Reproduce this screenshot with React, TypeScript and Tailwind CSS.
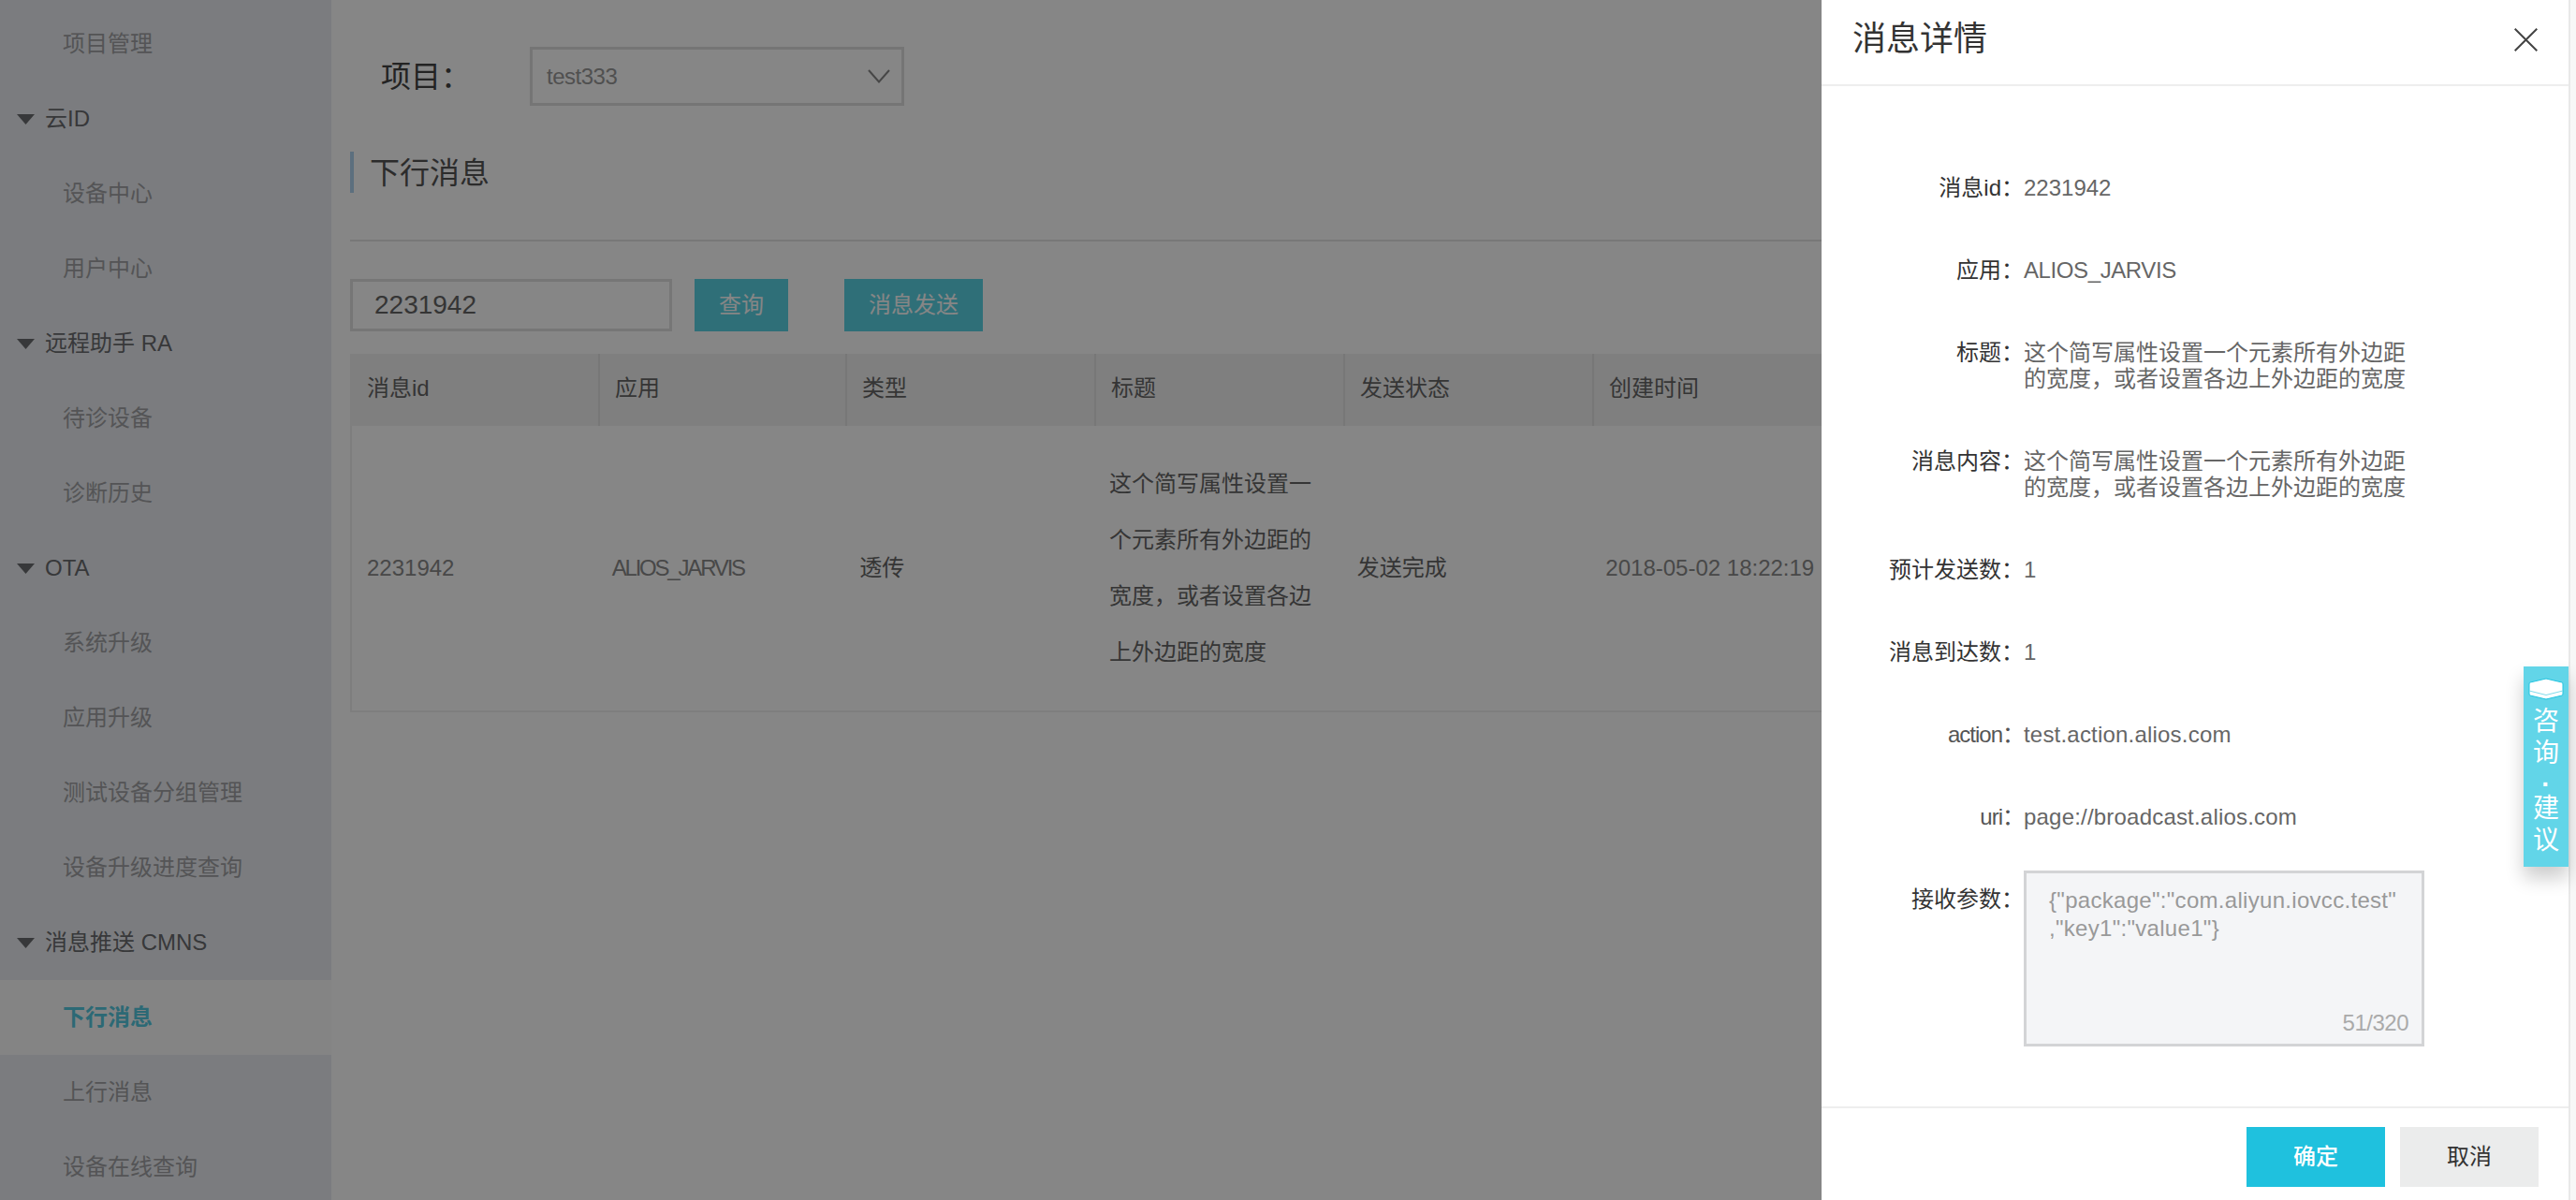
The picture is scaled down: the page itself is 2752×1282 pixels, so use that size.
import React from "react";

const font = '"Liberation Sans","Noto Sans CJK SC",sans-serif';

type SideItem = { text: string; parent?: boolean; active?: boolean };
const sideItems: SideItem[] = [
  { text: "项目管理" },
  { text: "云ID", parent: true },
  { text: "设备中心" },
  { text: "用户中心" },
  { text: "远程助手 RA", parent: true },
  { text: "待诊设备" },
  { text: "诊断历史" },
  { text: "OTA", parent: true },
  { text: "系统升级" },
  { text: "应用升级" },
  { text: "测试设备分组管理" },
  { text: "设备升级进度查询" },
  { text: "消息推送 CMNS", parent: true },
  { text: "下行消息", active: true },
  { text: "上行消息" },
  { text: "设备在线查询" },
];

function Sidebar() {
  return (
    <aside className="w-[354px] shrink-0 h-full bg-[#eaedf1] pt-[7px] overflow-hidden">
      {sideItems.map((it) =>
        it.parent ? (
          <div key={it.text} className="h-[80px] flex items-center pl-[18px] text-[24px] text-[#6a6b6e]">
            <svg width="19" height="11" viewBox="0 0 19 11" className="mr-[11px] shrink-0">
              <path d="M0 0H19L9.5 11Z" fill="#6a6b6e" />
            </svg>
            <span>{it.text}</span>
          </div>
        ) : (
          <div
            key={it.text}
            className={
              it.active
                ? "h-[80px] flex items-center pl-[67px] text-[24px] font-bold text-[#55c8de] bg-[#fcfcfc]"
                : "h-[80px] flex items-center pl-[67px] text-[24px] text-[#a0a1a4]"
            }
          >
            {it.text}
          </div>
        )
      )}
    </aside>
  );
}

const headers = [
  { t: "消息id", c: "w-[265px] flex items-center pl-[18px] pb-[4px]" },
  { t: "应用", c: "w-[264px] flex items-center pl-[16px] pb-[4px] border-l-2 border-[#e2e2e2]" },
  { t: "类型", c: "w-[266px] flex items-center pl-[16px] pb-[4px] border-l-2 border-[#e2e2e2]" },
  { t: "标题", c: "w-[266px] flex items-center pl-[16px] pb-[4px] border-l-2 border-[#e2e2e2]" },
  { t: "发送状态", c: "w-[266px] flex items-center pl-[16px] pb-[4px] border-l-2 border-[#e2e2e2]" },
  { t: "创建时间", c: "w-[265px] flex items-center pl-[16px] pb-[4px] border-l-2 border-[#e2e2e2]" },
];

function Table() {
  return (
    <div className="w-[1592px]">
      <div className="flex h-[77px] bg-[#f2f2f2] text-[24px] text-[#666]">
        {headers.map((h) => (
          <div key={h.t} className={h.c}>
            {h.t}
          </div>
        ))}
      </div>
      <div className="flex h-[306px] border-l-2 border-b-2 border-[#f0f0f0] text-[24px] text-[#666] items-center">
        <div className="w-[263px] pl-[16px] text-[#8a8a8a]">2231942</div>
        <div className="w-[265px] pl-[15px] text-[#8a8a8a] tracking-[-2.2px]">ALIOS_JARVIS</div>
        <div className="w-[266px] pl-[15px]">透传</div>
        <div className="w-[266px] pl-[16px] leading-[60px]">
          <div>这个简写属性设置一</div>
          <div>个元素所有外边距的</div>
          <div>宽度，或者设置各边</div>
          <div>上外边距的宽度</div>
        </div>
        <div className="w-[266px] pl-[15px]">发送完成</div>
        <div className="w-[266px] pl-[15px] text-[#8a8a8a] whitespace-nowrap">2018-05-02 18:22:19</div>
      </div>
    </div>
  );
}

function Main() {
  return (
    <main className="flex-1 pl-[20px] min-w-0 overflow-hidden">
      <div className="flex items-center mt-[50px] h-[63px]">
        <div className="w-[192px] pl-[33px] text-[32px] text-[#444] whitespace-nowrap">项目：</div>
        <div className="w-[400px] h-[63px] border-[3px] border-[#dedede] flex items-center justify-between pl-[15px] pr-[12px]">
          <span className="text-[24px] text-[#999] tracking-[-0.5px]">test333</span>
          <svg width="24" height="15" viewBox="0 0 24 15" fill="none">
            <path d="M1 1L12 13.5L23 1" stroke="#888" strokeWidth="2" />
          </svg>
        </div>
      </div>
      <div className="mt-[49px] h-[44px] flex items-center border-l-[4px] border-[#b0d4f0] pl-[17px] pt-[2px] text-[32px] text-[#555]">
        下行消息
      </div>
      <div className="mt-[50px] w-[1592px] h-[2px] bg-[#e4e4e4]" />
      <div className="mt-[40px] flex h-[56px]">
        <div className="w-[344px] h-[56px] border-[3px] border-[#e0e0e0] flex items-center pl-[23px] text-[28px] text-[#666]">
          2231942
        </div>
        <button className="ml-[24px] w-[100px] h-[56px] bg-[#5ad4e5] text-white text-[24px]">查询</button>
        <button className="ml-[60px] w-[148px] h-[56px] bg-[#5ad4e5] text-white text-[24px]">消息发送</button>
      </div>
      <div className="mt-[24px]">
        <Table />
      </div>
    </main>
  );
}

function Row({
  label,
  children,
  light,
  valueClass,
}: {
  label: string;
  children: React.ReactNode;
  light?: boolean;
  valueClass?: string;
}) {
  return (
    <div className="flex mb-[60px] text-[24px] leading-[28px]">
      <div className={light ? "w-[216px] text-right text-[#555] tracking-[-1px] shrink-0" : "w-[216px] text-right text-[#333] shrink-0"}>
        {label}：
      </div>
      <div className={valueClass ?? "text-[#666] whitespace-nowrap"}>{children}</div>
    </div>
  );
}

function Drawer() {
  return (
    <div className="absolute top-0 bottom-0 right-[8px] w-[798px] bg-white flex flex-col">
      <div className="h-[92px] shrink-0 border-b-2 border-[#eeeeee] flex items-center justify-between pl-[33px] pr-[33px] pb-[6px]">
        <span className="text-[36px] text-[#333]">消息详情</span>
        <svg width="25" height="25" viewBox="0 0 25 25" fill="none">
          <path d="M0.7 0.7L24.3 24.3M24.3 0.7L0.7 24.3" stroke="#444" strokeWidth="2" />
        </svg>
      </div>
      <div className="pt-[95px] flex-1 min-h-0">
        <Row label="消息id">2231942</Row>
        <Row label="应用" valueClass="text-[#666] whitespace-nowrap tracking-[-0.4px]">ALIOS_JARVIS</Row>
        <Row label="标题">
          这个简写属性设置一个元素所有外边距
          <br />
          的宽度，或者设置各边上外边距的宽度
        </Row>
        <Row label="消息内容">
          这个简写属性设置一个元素所有外边距
          <br />
          的宽度，或者设置各边上外边距的宽度
        </Row>
        <Row label="预计发送数">1</Row>
        <Row label="消息到达数">1</Row>
        <Row label="action" light valueClass="text-[#666] whitespace-nowrap tracking-[0.2px]">test.action.alios.com</Row>
        <Row label="uri" light valueClass="text-[#666] whitespace-nowrap tracking-[0.2px]">page://broadcast.alios.com</Row>
        <div className="flex -mt-[17px] text-[24px] leading-[28px]">
          <div className="w-[216px] text-right text-[#333] pt-[17px] shrink-0">接收参数：</div>
          <div className="w-[428px] h-[188px] border-[3px] border-[#d3d4d6] bg-[#f4f5f7] flex flex-col justify-between pl-[24px] pr-[14px] pt-[14px] pb-[8px] text-[#999]">
            <div className="leading-[30px] whitespace-nowrap tracking-[0.3px]">
              {'{"package":"com.aliyun.iovcc.test"'}
              <br />
              {',"key1":"value1"}'}
            </div>
            <div className="text-right text-[#aaa] tracking-[-0.5px]">51/320</div>
          </div>
        </div>
      </div>
      <div className="h-[100px] shrink-0 border-t-2 border-[#eeeeee] flex justify-end gap-[16px] pt-[20px] pr-[32px] text-[24px]">
        <button className="w-[148px] h-[64px] bg-[#1fc1de] text-white font-medium">确定</button>
        <button className="w-[148px] h-[64px] bg-[#ebecec] text-[#333]">取消</button>
      </div>
    </div>
  );
}

function Widget() {
  return (
    <div className="absolute right-[8px] top-[712px] w-[48px] h-[214px] bg-[#62d5e8] shadow-[0_12px_20px_rgba(0,0,0,0.2)] flex flex-col items-center pt-[12px] text-white text-[28px] leading-[34px]">
      <svg width="38" height="24" viewBox="0 0 38 24" className="mb-[6px] shrink-0">
        <path d="M2 5L19 1L36 5Q37 5 37 7V17Q37 19 36 19L19 23L2 19Q1 19 1 17V7Q1 5 2 5Z" fill="#fff" stroke="#22c4e0" strokeWidth="1" />
        <path d="M1 14L19 18.5L37 14" fill="none" stroke="#7fdcec" strokeWidth="1" />
      </svg>
      <div>咨</div>
      <div>询</div>
      <div className="h-[25px] leading-[32px] font-bold">·</div>
      <div>建</div>
      <div>议</div>
    </div>
  );
}

export default function App() {
  return (
    <div className="relative w-full h-[1282px] bg-white flex overflow-hidden" style={{ fontFamily: font }}>
      <Sidebar />
      <Main />
      <div className="absolute inset-0 bg-black/[0.475]" />
      <div className="absolute top-0 bottom-0 right-0 w-[8px] bg-[#f7f7f7] border-l-2 border-[#e8e8e8]" />
      <Drawer />
      <Widget />
    </div>
  );
}
